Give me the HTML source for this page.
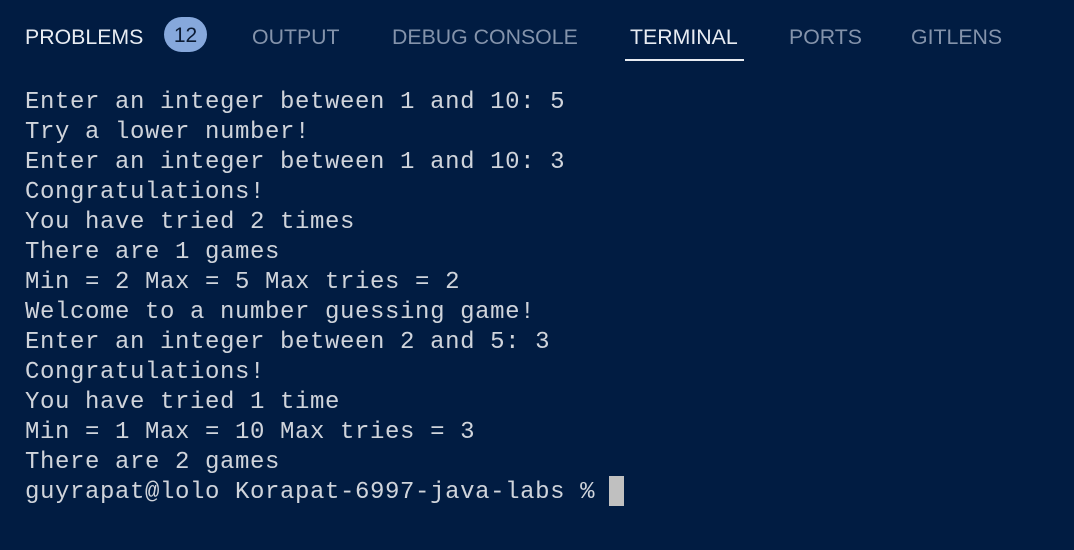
<!DOCTYPE html><html><head><style>
body{margin:0;width:1074px;height:550px;background:#011c42;overflow:hidden;position:relative;font-family:"Liberation Sans",sans-serif}
.t{position:absolute;top:25px;font-size:21.3px;color:#8493ab;white-space:nowrap}
.a{color:#e8ecf2}
.badge{position:absolute;left:164px;top:17px;width:43px;height:35px;border-radius:18px;background:#86a8dc;color:#0a1a33;font-size:21px;text-align:center;line-height:38px}
.ul{position:absolute;left:625px;top:59px;width:119px;height:2px;background:#e8ecf2}
pre{position:absolute;left:25px;top:88px;margin:0;font-family:"Liberation Mono",monospace;font-size:24px;letter-spacing:0.6px;line-height:30px;color:#d0d4db}
.cur{position:absolute;left:609px;top:476px;width:15px;height:30px;background:#c0c0c0}
</style></head><body>
<div class="t a" style="left:25px">PROBLEMS</div>
<div class="badge">12</div>
<div class="t" style="left:252px">OUTPUT</div>
<div class="t" style="left:392px">DEBUG CONSOLE</div>
<div class="t a" style="left:630px">TERMINAL</div>
<div class="ul"></div>
<div class="t" style="left:789px">PORTS</div>
<div class="t" style="left:911px">GITLENS</div>
<pre>Enter an integer between 1 and 10: 5
Try a lower number!
Enter an integer between 1 and 10: 3
Congratulations!
You have tried 2 times
There are 1 games
Min = 2 Max = 5 Max tries = 2
Welcome to a number guessing game!
Enter an integer between 2 and 5: 3
Congratulations!
You have tried 1 time
Min = 1 Max = 10 Max tries = 3
There are 2 games
guyrapat@lolo Korapat-6997-java-labs %</pre>
<div class="cur"></div>
</body></html>
